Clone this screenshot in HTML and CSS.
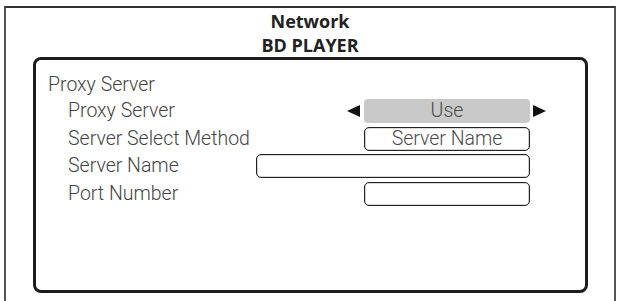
FILE: index.html
```html
<!DOCTYPE html>
<html>
<head>
<meta charset="utf-8">
<link rel="stylesheet" href="styles.css">
</head>
<body>
<div class="frame">
  <div class="title">
    <div>Network</div>
    <div>BD PLAYER</div>
  </div>
  <div class="panel">
    <div class="header">Proxy Server</div>
    <div class="rows">
      <div class="label r1">Proxy Server</div>
      <div class="arrow left r1"><svg width="13" height="12" viewBox="0 0 13 12"><polygon points="0,6 13,0 13,12" fill="#111"/></svg></div>
      <div class="value filled r1">Use</div>
      <div class="arrow right r1"><svg width="13" height="12" viewBox="0 0 13 12"><polygon points="0,0 13,6 0,12" fill="#111"/></svg></div>

      <div class="label r2">Server Select Method</div>
      <div class="value boxed r2">Server Name</div>

      <div class="label r3">Server Name</div>
      <div class="value boxed wide r3"></div>

      <div class="label r4">Port Number</div>
      <div class="value boxed r4"></div>
    </div>
  </div>
</div>
</body>
</html>
```

FILE: styles.css
```css
html, body {
  margin: 0;
  padding: 0;
  background: #fff;
}
body {
  width: 618px;
  height: 301px;
  overflow: hidden;
}
.frame {
  box-sizing: border-box;
  margin: 6px 0 0 4px;
  width: 612px;
  height: 300px;
  border: 2px solid #555;
  border-top-color: #333;
  border-bottom: none;
  padding-top: 1px;
}
.title {
  font-family: "Open Sans", "DejaVu Sans", sans-serif;
  font-weight: 700;
  font-size: 18px;
  line-height: 24px;
  color: #222;
  text-align: center;
  height: 48px;
}
.panel {
  box-sizing: border-box;
  margin: 0 26px 0 27px;
  height: 236px;
  border: 3px solid #1c1c1c;
  border-radius: 8px;
  padding: 13px 0 0 0;
  font-family: Roboto, "Liberation Sans", sans-serif;
  font-weight: 300;
  font-size: 19.5px;
  line-height: 24px;
  color: #444;
}
.header {
  padding-left: 12px;
}
.rows {
  margin-top: 2px;
  display: grid;
  grid-template-columns: 220px 91px 17px 166px 16px;
  grid-auto-rows: 24px;
  row-gap: 3.6px;
}
.label {
  grid-column: 1;
  padding-left: 32px;
  white-space: nowrap;
}
.r1 { grid-row: 1; }
.r2 { grid-row: 2; }
.r3 { grid-row: 3; }
.r4 { grid-row: 4; }
.arrow {
  display: flex;
  align-items: center;
}
.arrow.left {
  grid-column: 3;
  justify-content: flex-start;
}
.arrow.right {
  grid-column: 5;
  justify-content: flex-end;
}
.value {
  grid-column: 4;
  box-sizing: border-box;
  text-align: center;
  color: #4a4a4a;
}
.value.filled {
  background: #c9c9c9;
  border-radius: 4px;
}
.value.boxed {
  border: 1px solid #222;
  box-shadow: inset 0 0 0 0.6px rgba(0, 0, 0, 0.3);
  border-radius: 5px;
  line-height: 22px;
}
.value.wide {
  grid-column: 2 / 5;
}
```
